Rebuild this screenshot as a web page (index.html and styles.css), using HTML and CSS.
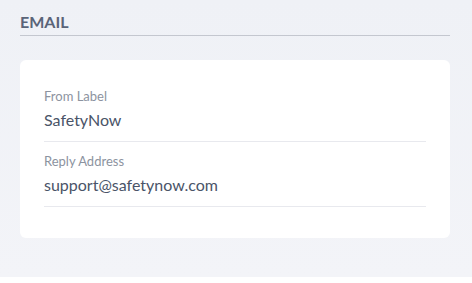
FILE: index.html
```html
<!DOCTYPE html>
<html lang="en">
<head>
	<meta charset="UTF-8">
	<meta name="viewport" content="width=device-width, initial-scale=1.0">
	<title>Email</title>
	<link rel="stylesheet" href="styles.css">
</head>
<body>
	<div class="page">
		<div class="section_head">
			<h2>EMAIL</h2>
		</div>
		<div class="card">
			<div class="field">
				<span class="field_label">From Label</span>
				<span class="field_value">SafetyNow</span>
			</div>
			<div class="field">
				<span class="field_label">Reply Address</span>
				<span class="field_value">support@safetynow.com</span>
			</div>
		</div>
	</div>
</body>
</html>
```

FILE: styles.css
```css
body {
	margin: 0;
	background-color: #ffffff;
	font-family: Lato, "Noto Sans", sans-serif;
}

.page {
	height: 277px;
	box-sizing: border-box;
	padding: 12px 22px 0 20px;
	background: linear-gradient(to bottom, #eff1f6, #f3f4f8);
}

.section_head {
	border-bottom: 1px solid #c4c7cf;
	padding-bottom: 4px;
}

.section_head h2 {
	margin: 0;
	font-size: 16px;
	font-weight: 700;
	color: #5a6478;
	line-height: 19px;
}

.card {
	margin-top: 24px;
	background-color: #ffffff;
	border-radius: 6px;
	padding: 28px 24px 31px 24px;
}

.field {
	display: flex;
	flex-direction: column;
	border-bottom: 1px solid #e8e9ee;
	padding-bottom: 11px;
	margin-bottom: 11px;
}

.field:last-child {
	margin-bottom: 0;
}

.field_label {
	font-size: 13px;
	color: #8c93a0;
	line-height: 16px;
}

.field_value {
	margin-top: 6px;
	font-size: 16px;
	color: #4a5468;
	line-height: 20px;
}
```
